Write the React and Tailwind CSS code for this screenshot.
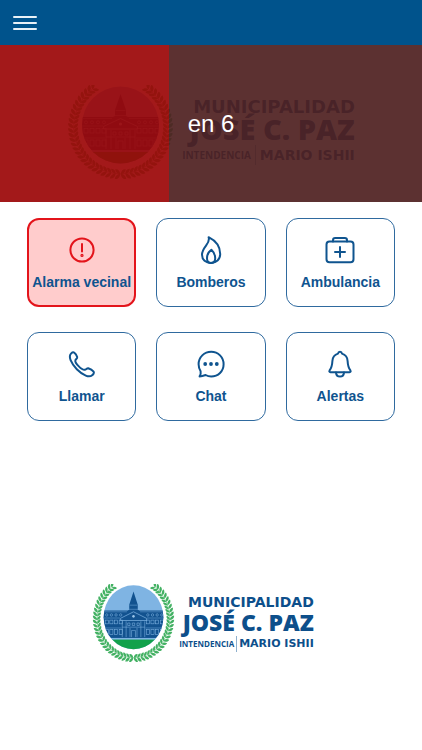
/**
 * Emergency home screen
 * Alarm banner with countdown, quick actions and the municipality logo
 */

import { useId } from "react";

const COUNTDOWN = { secondsLeft: 6, progress: 40 };

function AlertIcon() {
  return (
    <>
      <circle cx="16" cy="16" r="11.6" />
      <path d="M16 10v7.6" />
      <circle cx="16" cy="21.4" r="0.6" />
    </>
  );
}

function FlameIcon() {
  return (
    <>
      <path d="M13.6 3.2c1 2.800-.2 5.200-2.400 8.200-2.400 3.200-4.200 5.600-4.200 9.400 0 5 3.800 8.200 9 8.200s9.200-3.400 9.200-9c0-7.600-4.800-13.400-11.600-16.800Z" />
      <path d="M16.400 15.800c-3 2-4.400 5.400-4.400 8.400 0 3 1.600 4.800 4 4.800s4.200-1.800 4.200-4.800c0-3.200-1.200-6-3.800-8.400Z" />
    </>
  );
}

function MedkitIcon() {
  return (
    <>
      <rect x="2.500" y="7.600" width="27" height="20.600" rx="3" />
      <path d="M9 7.400V6.200C9 4.800 9.800 4 11.200 4h9.600C22.200 4 23 4.800 23 6.200v1.200" />
      <path d="M16 13v10M11 18h10" />
    </>
  );
}

function PhoneIcon() {
  return (
    <path d="M5.200 5.400c1-1 2.200-1.400 3-.8 1 .6 2.600 3.200 3 4.400.4 1.400-1.400 2-1.800 3.200-.6 1.800 1.600 4.400 3.400 6.200s4.200 3.800 6 3.400c1.400-.2 2-1.800 3.400-1.600 1.400.4 4.600 2.400 5.400 3.400.8 1-.2 2.800-1.400 3.600-1.400 1.200-3.600 1.600-6.400.4-3-1.200-6.200-3.600-9-6.400s-5-6-6.200-9C3.600 9.600 3.800 6.800 5.200 5.400Z" />
  );
}

function ChatIcon() {
  return (
    <>
      <path d="M4.600 28.400c1-1.600 1.400-3.400 1-5.200C4.400 21.200 3.600 18.800 3.600 16.200 3.600 9.200 9.200 3.800 16.200 3.800S28.600 9.200 28.600 16.200s-5.400 12.200-12.400 12.200c-2.200 0-3.800-.4-5.600-1.400-2 .8-4 1.400-6 1.400Z" />
      <g fill="currentColor" stroke="none">
        <circle cx="10.200" cy="16" r="1.900" />
        <circle cx="16" cy="16" r="1.900" />
        <circle cx="21.800" cy="16" r="1.900" />
      </g>
    </>
  );
}

function BellIcon() {
  return (
    <>
      <path d="M16 3.800c-1.200 0-1.800.6-2 1.800-3.600 1-5.400 3.800-5.600 7.400-.2 4.200-.8 6.800-2.800 9.400-.6 1-.2 1.800.8 1.800h19.200c1 0 1.400-.8.8-1.800-2-2.600-2.600-5.200-2.800-9.400-.2-3.600-2-6.400-5.600-7.400-.2-1.200-.8-1.800-2-1.800Z" />
      <path d="M12 24.600c.2 2.600 1.800 4 4 4s3.800-1.400 4-4" />
    </>
  );
}

const ACTIONS = [
  { id: "alarm", label: "Alarma vecinal", icon: AlertIcon, active: true },
  { id: "fire", label: "Bomberos", icon: FlameIcon },
  { id: "ambulance", label: "Ambulancia", icon: MedkitIcon },
  { id: "call", label: "Llamar", icon: PhoneIcon },
  { id: "chat", label: "Chat", icon: ChatIcon },
  { id: "alerts", label: "Alertas", icon: BellIcon },
];

function ActionButton({ label, icon: Icon, active = false }) {
  return (
    <button
      type="button"
      className={`flex h-[89px] flex-col items-center justify-center gap-1.5 rounded-xl font-bold text-[#0f548f] ${
        active
          ? "border-2 border-[#e3141b] bg-[#ffcccc]"
          : "border border-[#2f6a9f] bg-white"
      }`}
    >
      <svg
        viewBox="0 0 32 32"
        className={`size-8 ${active ? "text-[#e3141b]" : ""}`}
        fill="none"
        stroke="currentColor"
        strokeWidth="2"
        strokeLinecap="round"
        strokeLinejoin="round"
        aria-hidden="true"
      >
        <Icon />
      </svg>
      <span className="text-sm whitespace-nowrap">{label}</span>
    </button>
  );
}

// One laurel branch, leaves going from the bottom up to the left tip
const LEAF_COUNT = 27;
const LEAVES = Array.from({ length: LEAF_COUNT }, (_, i) => 91 + i * 5.5);

function Branch() {
  return (
    <g>
      <path
        d="M53.500 88.800A47 47 0 0 1 25 4.500"
        fill="none"
        stroke="#6cc583"
        strokeWidth="0.800"
      />
      {LEAVES.map((angle) => (
        <g
          key={angle}
          transform={`translate(53.5 42) rotate(${angle}) translate(47 0)`}
          fill="#43b163"
        >
          <path d="M0-.5C-.2 2 2 4.600 5.200 4.800 5.800 2.200 3.600-.4 0-.5Z" />
          <path d="M0-.5C.2 2-1.600 4.200-4.400 4.600-5.200 2.200-3.200-.2 0-.5Z" />
        </g>
      ))}
    </g>
  );
}

const WING_WINDOWS = [17, 23, 29, 35, 70, 76, 82, 88];

function Emblem({ className }) {
  const clipId = useId();

  return (
    <svg
      viewBox="0 0 107 94"
      preserveAspectRatio="none"
      className={className}
      aria-hidden="true"
    >
      <defs>
        <clipPath id={clipId}>
          <circle cx="53.500" cy="40" r="38.500" />
        </clipPath>
      </defs>
      <Branch />
      <g transform="translate(107 0) scale(-1 1)">
        <Branch />
      </g>
      <g clipPath={`url(#${clipId})`}>
        <rect width="107" height="94" fill="#7fb4e3" />
        {/* Building */}
        <path d="M0 32h46l2-1v-6l5.500-16L59 25v6l2 1h46v33H0Z" fill="#12528f" />
        <path
          d="M48.500 25.500h10M47.500 30.500h12M0 33.500h45M62 33.500h45M0 41h36M71 41h36M0 53h38M69 53h38"
          stroke="#6ba3d6"
          strokeWidth="0.700"
        />
        <path
          d="M53.500 33.500 36.500 41.500v2.500h34v-2.500Z"
          fill="#12528f"
          stroke="#7fb4e3"
          strokeWidth="0.900"
        />
        <circle cx="53.500" cy="39" r="1.600" fill="#9cc6ea" />
        <g fill="none" stroke="#7fb4e3" strokeWidth="0.700">
          {WING_WINDOWS.map((x) => (
            <g key={x}>
              <circle cx={x + 2} cy="37.300" r="1.500" />
              <rect x={x} y="43.500" width="4" height="4.500" />
              <rect x={x} y="55" width="4" height="6" />
            </g>
          ))}
          <path d="M39 45v19M44 45v19M49 53v11M58 53v11M63 45v19M68 45v19" />
          <path d="M39 52h29M46 47h3v3h-3ZM52 47h3v3h-3ZM58 47h3v3h-3Z" />
          <path d="M51 64v-8h5v8" />
        </g>
        <rect y="65" width="107" height="2" fill="#7fb4e3" />
        <rect y="67" width="107" height="20" fill="#12a14b" />
      </g>
    </svg>
  );
}

const logoSizes = {
  large: {
    root: "gap-2",
    emblem: "h-[94px] w-[107px]",
    town: "text-[18px] leading-4",
    name: "text-[29px] leading-7",
    row: "gap-1 leading-6",
    office: "text-[10px]",
    divider: "h-5",
    mayor: "text-[14px]",
  },
  small: {
    root: "gap-1",
    emblem: "h-[78px] w-[83px]",
    town: "text-[14px] leading-4",
    name: "text-[23px] leading-6",
    row: "gap-0.5 leading-5",
    office: "text-[8px]",
    divider: "h-4",
    mayor: "text-[11px]",
  },
};

function Logo({ size = "small" }) {
  const styles = logoSizes[size];

  return (
    <div className={`flex items-center ${styles.root}`}>
      <Emblem className={`shrink-0 ${styles.emblem}`} />
      <div className="flex flex-col items-end pt-0.5 font-['Open_Sans',sans-serif] whitespace-nowrap text-[#0d4f8b]">
        <span
          className={`font-['DejaVu_Sans',sans-serif] font-bold ${styles.town}`}
        >
          MUNICIPALIDAD
        </span>
        <span className={`font-extrabold ${styles.name}`}>JOSÉ C. PAZ</span>
        <div className={`flex items-center font-bold ${styles.row}`}>
          <span className={styles.office}>INTENDENCIA</span>
          <span className={`w-px bg-[#8fb0cd] ${styles.divider}`} />
          <span className={`font-['DejaVu_Sans',sans-serif] ${styles.mayor}`}>
            MARIO ISHII
          </span>
        </div>
      </div>
    </div>
  );
}

function CountdownBanner({ secondsLeft, progress }) {
  return (
    <section className="relative flex h-[157px] items-center justify-center bg-white pt-4">
      <Logo size="large" />
      {/* Tint over the logo, red part grows with the countdown */}
      <div className="absolute inset-0 flex">
        <div className="bg-[#9b0507]/92" style={{ width: `${progress}%` }} />
        <div className="flex-1 bg-[#4e1f1f]/92" />
      </div>
      <p className="absolute inset-0 flex items-center justify-center text-2xl text-white">
        en {secondsLeft}
      </p>
    </section>
  );
}

export default function App() {
  return (
    <div className="flex min-h-screen flex-col bg-white font-['Liberation_Sans',Arial,sans-serif]">
      <header className="flex h-[45px] items-center bg-[#00538c] px-[13px]">
        <button
          type="button"
          aria-label="Menú"
          className="flex w-6 flex-col gap-1"
        >
          <span className="h-0.5 rounded-full bg-[#e8f1f7]" />
          <span className="h-0.5 rounded-full bg-[#e8f1f7]" />
          <span className="h-0.5 rounded-full bg-[#e8f1f7]" />
        </button>
      </header>

      <CountdownBanner {...COUNTDOWN} />

      <main className="grid grid-cols-3 gap-x-5 gap-y-[25px] px-[27px] pt-4">
        {ACTIONS.map(({ id, ...action }) => (
          <ActionButton key={id} {...action} />
        ))}
      </main>

      <footer className="mt-auto flex justify-center pr-4 pb-[88px]">
        <Logo />
      </footer>
    </div>
  );
}
